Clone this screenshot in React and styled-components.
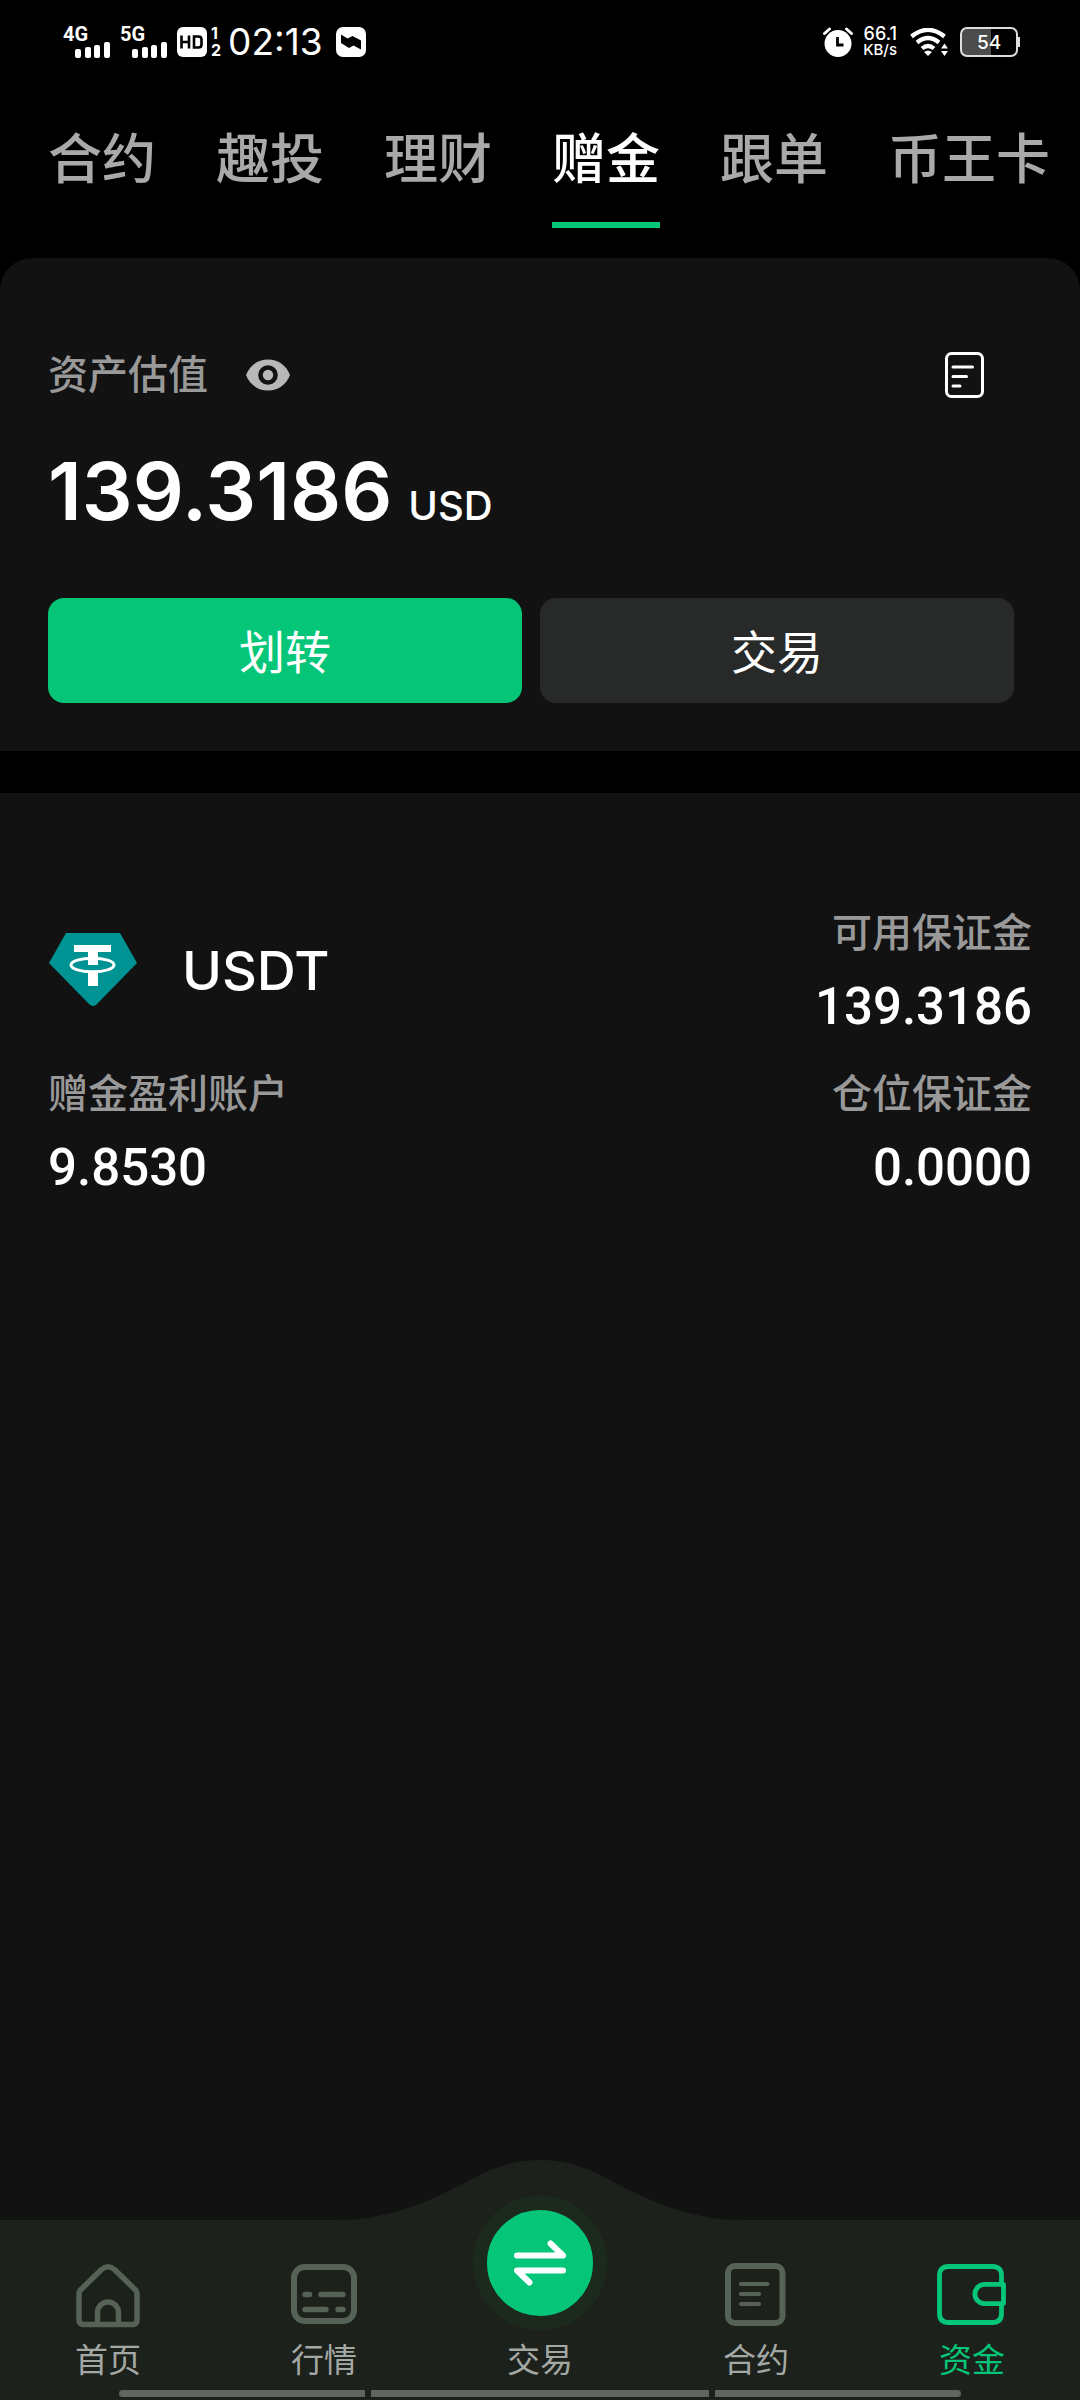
import React, { useState } from "react";
import styled, { createGlobalStyle } from "styled-components";

const GlobalStyle = createGlobalStyle`
  * {
    box-sizing: border-box;
  }

  body {
    margin: 0;
    background: #000;
    color: #fff;
    font-family: Inter, "Noto Sans CJK SC", sans-serif;
  }

  button {
    padding: 0;
    border: none;
    background: none;
    color: inherit;
    font: inherit;
    cursor: pointer;
  }

  a {
    color: inherit;
    text-decoration: none;
  }

  svg {
    display: block;
    flex-shrink: 0;
  }
`;

const Page = styled.div`
  display: flex;
  flex-direction: column;
  min-height: 100vh;
`;

/* ---------- status bar ---------- */
const StatusBar = styled.header`
  display: flex;
  justify-content: space-between;
  align-items: center;
  height: 84px;
  padding: 0 60px 0 63px;
`;
const StatusGroup = styled.div`
  display: flex;
  align-items: center;
  gap: ${(props) => props.$gap}px;
`;
const Signal = styled.div`
  display: flex;
  flex-direction: column;
  align-items: flex-start;
  width: 48px;
  height: 32px;
  font-family: Roboto, sans-serif;
  font-size: 20px;
  font-weight: 700;
  line-height: 16px;

  svg {
    align-self: flex-end;
  }
`;
const SimNumbers = styled.div`
  display: flex;
  flex-direction: column;
  margin: 0 -2px 0 -5px;
  font-size: 16px;
  font-weight: 700;
  line-height: 17px;
`;
const Clock = styled.time`
  margin-right: 4px;
  font-size: 37px;
  line-height: 40px;
`;
const Speeds = styled.div`
  margin-right: 3px;
`;
const Speed = styled.div`
  font-size: ${(props) => (props.$small ? 15 : 18)}px;
  font-weight: 500;
  line-height: 16px;
  text-align: right;
`;
const Battery = styled.div`
  display: flex;
  align-items: center;
`;
const BatteryBody = styled.div`
  display: flex;
  align-items: center;
  justify-content: center;
  width: 58px;
  height: 30px;
  border: 2px solid #ddd;
  border-radius: 7px;
  background: linear-gradient(to right, #4c4c4c 54%, #000 54%);
  font-size: 19px;
  font-weight: 500;
`;
const BatteryTip = styled.div`
  width: 2px;
  height: 10px;
  background: #ddd;
`;

/* ---------- tabs ---------- */
const Tabs = styled.nav`
  display: flex;
  gap: 60px;
  padding: 40px 0 30px 48px;
  overflow: hidden;
`;
const Tab = styled.button`
  flex-shrink: 0;
  padding-bottom: 26px;
  border-bottom: 6px solid ${(props) => (props.$active ? "#05c678" : "transparent")};
  color: ${(props) => (props.$active ? "#fff" : "#a9a9a9")};
  font-size: 54px;
  font-weight: 500;
  line-height: 72px;
`;

/* ---------- overview ---------- */
const Overview = styled.section`
  padding: 87px 66px 48px 48px;
  border-radius: 32px 32px 0 0;
  background: #121212;
`;
const OverviewHead = styled.div`
  display: flex;
  align-items: center;
  height: 60px;
`;
const Label = styled.span`
  color: #999;
  font-size: 40px;
  font-weight: 500;
  line-height: 56px;
`;
const EyeButton = styled.button`
  margin-left: 38px;
`;
const RecordsButton = styled.button`
  margin: 0 30px 0 auto;
`;
const Total = styled.p`
  display: flex;
  align-items: baseline;
  gap: 16px;
  height: 84px;
  margin: 44px 0 65px;
  font-size: 80px;
  font-weight: 600;
  line-height: 84px;

  small {
    font-size: 40px;
    font-weight: 500;
    line-height: 40px;
  }
`;
const Actions = styled.div`
  display: grid;
  grid-template-columns: 1fr 1fr;
  gap: 18px;
`;
const ActionButton = styled.button`
  height: 105px;
  padding-bottom: 3px;
  border-radius: 16px;
  background: ${(props) => (props.$primary ? "#05c678" : "#282a29")};
  font-size: 46px;
`;

/* ---------- account ---------- */
const Account = styled.main`
  flex: 1;
  margin-top: 42px;
  padding: 112px 48px 120px;
  background: #121212;
`;
const AccountGrid = styled.div`
  display: grid;
  grid-template-columns: 1fr auto;
  row-gap: 31px;
`;
const Coin = styled.div`
  display: flex;
  align-items: center;
  gap: 44px;
  font-size: 54px;
  font-weight: 500;
`;
const Figure = styled.div`
  display: flex;
  flex-direction: column;
  gap: 18px;
  text-align: ${(props) => (props.$right ? "right" : "left")};
`;
const Value = styled.strong`
  font-family: Roboto, sans-serif;
  font-size: 51px;
  font-weight: 500;
  line-height: 56px;
`;

/* ---------- bottom bar ---------- */
const BottomBar = styled.footer`
  position: relative;
  padding-top: 42px;
  background: #1c211c;
`;
const Hump = styled.svg`
  position: absolute;
  bottom: calc(100% - 1px);
  left: 50%;
  transform: translateX(-50%);
`;
const NavRow = styled.nav`
  position: relative;
  display: grid;
  grid-template-columns: repeat(5, 1fr);
`;
const NavItem = styled.a`
  display: flex;
  flex-direction: column;
  align-items: center;
  gap: 12px;
  color: ${(props) => (props.$active ? "#05c678" : "#a4a8a4")};
  font-size: 33px;
  line-height: 40px;
`;
const TradeCircle = styled.span`
  display: flex;
  align-items: center;
  justify-content: center;
  width: 134px;
  height: 134px;
  margin: -66px 0 -2px;
  border: 14px solid #1c2a1e;
  border-radius: 50%;
  background: #05c678;
`;
const GestureBar = styled.div`
  display: grid;
  grid-template-columns: 245fr 338fr 245fr;
  gap: 6px;
  width: 78%;
  margin: 0 auto;
  padding: 10px 0 3px;
`;
const GestureSegment = styled.span`
  height: 7px;
  background: #60655f;

  &:first-child {
    border-radius: 4px 0 0 4px;
  }
  &:last-child {
    border-radius: 0 4px 4px 0;
  }
`;

/* ---------- icons ---------- */
const SignalBars = () => (
  <svg width="36" height="16" viewBox="0 0 36 16" fill="#fff">
    <rect x="0" y="7" width="6" height="9" rx="2" />
    <rect x="10" y="5" width="6" height="11" rx="2" />
    <rect x="19" y="3" width="6" height="13" rx="2" />
    <rect x="29" y="0" width="6" height="16" rx="2" />
  </svg>
);

const HdIcon = () => (
  <svg width="30" height="30" viewBox="0 0 30 30">
    <rect width="30" height="30" rx="6" fill="#fff" />
    <path
      d="M4.500 8.500v13M12 8.500v13M4.500 15H12M17 9.500h4.500q3 0 3 3v5q0 3-3 3H17z"
      fill="none"
      stroke="#000"
      strokeWidth="2.600"
    />
  </svg>
);

const AppIcon = () => (
  <svg width="30" height="30" viewBox="0 0 30 30">
    <rect width="30" height="30" rx="7" fill="#fff" />
    <path d="M5 7.500L11.500 11.500L16.500 9L25 13.500V22.500L17.500 18.500L13 21L5 16z" fill="#000" />
  </svg>
);

const AlarmIcon = () => (
  <svg width="30" height="30" viewBox="0 0 30 30" fill="none" strokeLinecap="round">
    <circle cx="15" cy="16.500" r="13.500" fill="#fff" />
    <path d="M1.500 6.500L6.500 2M28.500 6.500L23.500 2" stroke="#fff" strokeWidth="3" />
    <path d="M14.500 10v8h6" stroke="#000" strokeWidth="2.800" strokeLinecap="butt" />
  </svg>
);

const WifiIcon = () => (
  <svg width="40" height="29" viewBox="0 0 40 29" fill="none">
    <path d="M1.500 8.500Q18 -5 34.500 8.500" stroke="#fff" strokeWidth="4.200" />
    <path d="M7 14.500Q18 5.500 29 14.500" stroke="#fff" strokeWidth="4.200" />
    <path d="M12 20.500Q18 15.500 24 20.500" stroke="#fff" strokeWidth="4.200" />
    <path d="M14 24Q18 21 22 24L18 28z" fill="#fff" />
    <path d="M31 20.500L34.500 15.500L38 20.500zM31 23L34.500 28L38 23z" fill="#fff" />
  </svg>
);

const EyeIcon = () => (
  <svg width="44" height="32" viewBox="0 0 44 32">
    <path d="M0 16C4 6 12 .500 22 .500S40 6 44 16C40 26 32 31.500 22 31.500S4 26 0 16z" fill="#b8b8b8" />
    <circle cx="22" cy="16" r="7.500" fill="#b8b8b8" stroke="#121212" strokeWidth="4.600" />
  </svg>
);

const RecordsIcon = () => (
  <svg width="39" height="46" viewBox="0 0 39 46" fill="none" stroke="#fff" strokeWidth="3">
    <rect x="1.500" y="1.500" width="36" height="43" rx="5" />
    <path d="M8 15H27.500M8 24.500H21.500M8 34H15" strokeLinecap="round" />
  </svg>
);

const TetherLogo = () => (
  <svg width="90" height="74" viewBox="0 0 90 74">
    <path d="M18 0H72L89 30L49 71Q45 75 41 71L1 30z" fill="#009393" />
    <path d="M26 12H63V19H50V32H40V19H26zM40 39H50V53H40z" fill="#fff" />
    <ellipse cx="44.500" cy="32" rx="21.500" ry="6.800" fill="none" stroke="#fff" strokeWidth="3" />
  </svg>
);

const navIconProps = {
  width: 70,
  height: 66,
  viewBox: "0 0 70 66",
  fill: "none",
  stroke: "#566256",
  strokeLinejoin: "round",
};

const HomeIcon = () => (
  <svg {...navIconProps} strokeWidth="5.500">
    <path d="M28.500 7.500Q35 2 41.500 7.500L62.500 28Q64 29.500 64 31V58Q64 62.500 59.500 62.500H10.500Q6 62.500 6 58V31Q6 29.500 7.500 28z" />
    <path d="M24.500 62V50.500A10.500 10.500 0 0 1 45.500 50.500V62" />
  </svg>
);

const MarketIcon = () => (
  <svg {...navIconProps} strokeWidth="6" strokeLinecap="round">
    <rect x="5" y="5" width="60" height="54" rx="11" />
    <path d="M16 32.500H20.500M32 32.500H54M16 47.500H37M49 47.500H54" strokeWidth="5.500" />
  </svg>
);

const ContractIcon = () => (
  <svg {...navIconProps} strokeWidth="6" strokeLinecap="round">
    <rect x="7" y="4" width="54.500" height="57" rx="7" />
    <path d="M20 22H46.500M20 32H38M20 42H38" strokeWidth="4.200" />
  </svg>
);

const WalletIcon = () => (
  <svg {...navIconProps} stroke="#05c678" strokeWidth="4.800">
    <path d="M64.500 20.500V13.500Q64.500 4.500 55.500 4.500H11.500Q2.500 4.500 2.500 13.500V51.500Q2.500 60.500 11.500 60.500H55.500Q64.500 60.500 64.500 51.500V43" />
    <path d="M66.500 22.400H47.500A9.600 9.600 0 0 0 47.500 41.600H66.500z" />
  </svg>
);

const SwapIcon = () => (
  <svg
    width="54"
    height="46"
    viewBox="0 0 54 46"
    fill="none"
    stroke="#fff"
    strokeWidth="6"
    strokeLinecap="round"
    strokeLinejoin="round"
  >
    <path d="M4 15.500H50L37.500 3.500" />
    <path d="M50 30.500H4L16.500 42.500" />
  </svg>
);

const tabs = ["合约", "趣投", "理财", "赠金", "跟单", "币王卡"];

export default function App() {
  const [activeTab, setActiveTab] = useState("赠金");
  const [hidden, setHidden] = useState(false);

  const show = (amount) => (hidden ? "****" : amount);

  return (
    <Page>
      <GlobalStyle />
      <StatusBar>
        <StatusGroup $gap={9}>
          <Signal>
            4G
            <SignalBars />
          </Signal>
          <Signal>
            5G
            <SignalBars />
          </Signal>
          <HdIcon />
          <SimNumbers>
            <span>1</span>
            <span>2</span>
          </SimNumbers>
          <Clock>02:13</Clock>
          <AppIcon />
        </StatusGroup>
        <StatusGroup $gap={10}>
          <AlarmIcon />
          <Speeds>
            <Speed>66.1</Speed>
            <Speed $small>KB/s</Speed>
          </Speeds>
          <WifiIcon />
          <Battery>
            <BatteryBody>54</BatteryBody>
            <BatteryTip />
          </Battery>
        </StatusGroup>
      </StatusBar>

      <Tabs>
        {tabs.map((tab) => (
          <Tab key={tab} $active={tab === activeTab} onClick={() => setActiveTab(tab)}>
            {tab}
          </Tab>
        ))}
      </Tabs>

      <Overview>
        <OverviewHead>
          <Label>资产估值</Label>
          <EyeButton aria-label="显示或隐藏金额" onClick={() => setHidden(!hidden)}>
            <EyeIcon />
          </EyeButton>
          <RecordsButton aria-label="记录">
            <RecordsIcon />
          </RecordsButton>
        </OverviewHead>
        <Total>
          {show("139.3186")}
          <small>USD</small>
        </Total>
        <Actions>
          <ActionButton $primary>划转</ActionButton>
          <ActionButton>交易</ActionButton>
        </Actions>
      </Overview>

      <Account>
        <AccountGrid>
          <Coin>
            <TetherLogo />
            USDT
          </Coin>
          <Figure $right>
            <Label>可用保证金</Label>
            <Value>{show("139.3186")}</Value>
          </Figure>
          <Figure>
            <Label>赠金盈利账户</Label>
            <Value>{show("9.8530")}</Value>
          </Figure>
          <Figure $right>
            <Label>仓位保证金</Label>
            <Value>{show("0.0000")}</Value>
          </Figure>
        </AccountGrid>
      </Account>

      <BottomBar>
        <Hump width="400" height="61" viewBox="0 0 400 61">
          <path d="M0 61C50 58 88 43 130 20Q165 0 200 0T270 20C312 43 350 58 400 61z" fill="#1c211c" />
        </Hump>
        <NavRow>
          <NavItem href="#home">
            <HomeIcon />
            首页
          </NavItem>
          <NavItem href="#market">
            <MarketIcon />
            行情
          </NavItem>
          <NavItem href="#trade">
            <TradeCircle>
              <SwapIcon />
            </TradeCircle>
            交易
          </NavItem>
          <NavItem href="#contract">
            <ContractIcon />
            合约
          </NavItem>
          <NavItem href="#assets" $active>
            <WalletIcon />
            资金
          </NavItem>
        </NavRow>
        <GestureBar>
          <GestureSegment />
          <GestureSegment />
          <GestureSegment />
        </GestureBar>
      </BottomBar>
    </Page>
  );
}
